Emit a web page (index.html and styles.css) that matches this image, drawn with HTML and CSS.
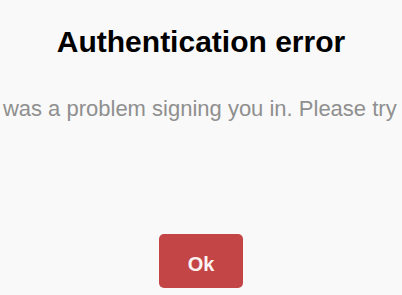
FILE: index.html
```html
<!DOCTYPE html>
<html>
<head>
<meta charset="utf-8">
<link rel="stylesheet" href="styles.css">
</head>
<body>
<main class="dialog">
  <h1 class="title">Authentication error</h1>
  <p class="message">There was a problem signing you in. Please try again.</p>
  <button class="ok-btn">Ok</button>
</main>
</body>
</html>
```
FILE: styles.css
```css
html, body {
  margin: 0;
  padding: 0;
  background: #f9f9f9;
  overflow: hidden;
  height: 100%;
}
.dialog {
  display: flex;
  flex-direction: column;
  align-items: center;
  font-family: "Liberation Sans", Arial, sans-serif;
  padding-top: 25px;
}
.title {
  margin: 0;
  font-size: 30px;
  font-weight: bold;
  color: #000;
  line-height: 34px;
  white-space: nowrap;
}
.message {
  margin: 37px 0 0;
  font-size: 22px;
  line-height: 25px;
  color: #8f8f8f;
  white-space: nowrap;
}
.ok-btn {
  margin-top: 113px;
  width: 84px;
  height: 54px;
  box-sizing: border-box;
  padding: 19px 0 12px;
  border: none;
  border-radius: 5px;
  background: #c44545;
  color: #fbf3f3;
  font-family: "Liberation Sans", Arial, sans-serif;
  font-size: 20px;
  font-weight: bold;
  line-height: 23px;
}
```
